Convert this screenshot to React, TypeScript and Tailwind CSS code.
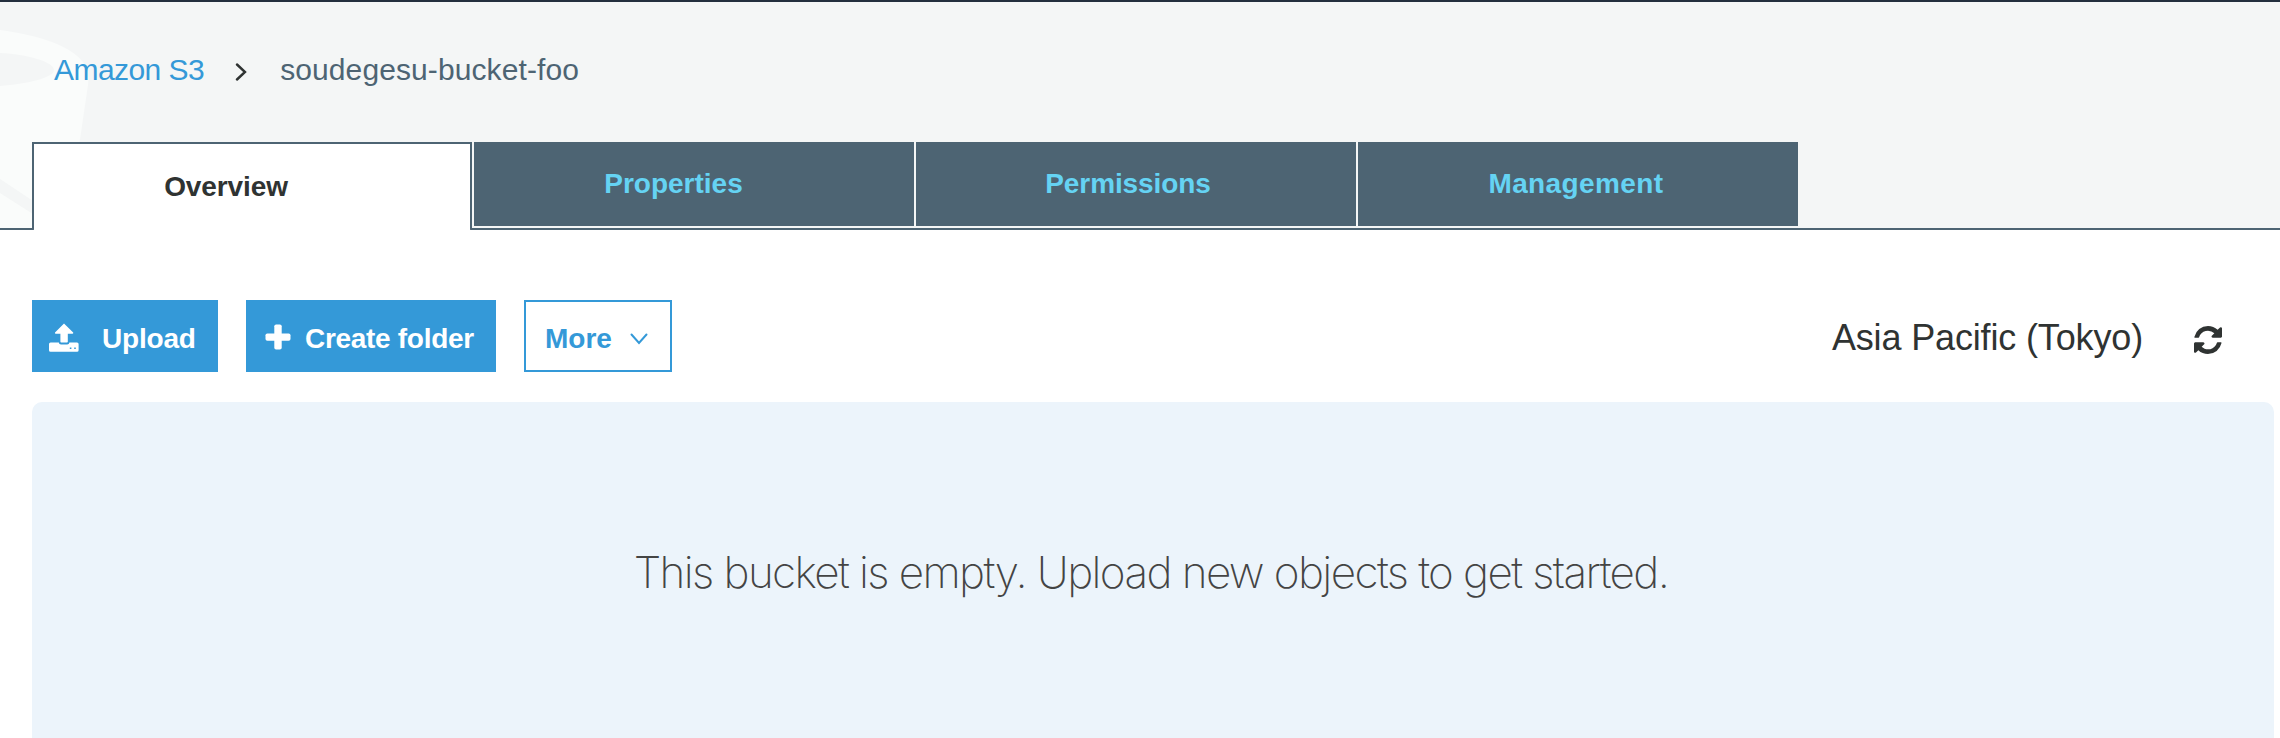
import type { ReactNode } from "react";

function BucketWatermark() {
  return (
    <svg className="pointer-events-none absolute left-0 top-0 h-[226px] w-[100px]" viewBox="0 2 100 226" aria-hidden="true">
      <path
        fill="#fafcfb"
        fillRule="evenodd"
        d="M0 30C38 35 74 46 85 65C88 71 89 78 88 85L67 228H0V193L33 214V201L0 179V86C26 84 54 78 54 70C54 62 27 54 0 53Z"
      />
    </svg>
  );
}

function UploadIcon() {
  return (
    <svg className="-mt-[2px] h-[30px] w-[30px] shrink-0" viewBox="0 0 30 30" fill="currentColor" aria-hidden="true">
      <path d="M15 .4 24.2 9.6Q24.6 10.6 23.6 10.8H18.8V18.8Q18.8 19.6 18 19.6H12.2Q11.4 19.6 11.4 18.8V10.8H6.6Q5.6 10.6 6 9.6Z" />
      <path
        fillRule="evenodd"
        d="M1.6 19.4H9.8Q10 21.4 12 21.4H18.2Q20.2 21.4 20.4 19.4H28Q29.6 19.4 29.6 21V27.2Q29.6 28.8 28 28.8H1.6Q0 28.8 0 27.2V21Q0 19.4 1.6 19.4ZM20.8 24.4V26H22.4V24.4ZM25.2 24.4V26H26.8V24.4Z"
      />
    </svg>
  );
}

function PlusIcon() {
  return (
    <svg className="mt-[2px] h-[26px] w-[26px] shrink-0" viewBox="0 0 26 26" fill="currentColor" aria-hidden="true">
      <rect x=".5" y="9.4" width="25" height="7.4" rx="1.8" />
      <rect x="9.3" y=".5" width="7.4" height="25" rx="1.8" />
    </svg>
  );
}

function RefreshIcon() {
  return (
    <svg className="h-7 w-7" viewBox="0 0 1536 1536" fill="currentColor" aria-hidden="true">
      <path d="M1511 928q0 5-1 7-64 268-268 434.500t-478 166.500q-146 0-282.500-55t-243.500-157l-129 129q-19 19-45 19t-45-19-19-45v-448q0-26 19-45t45-19h448q26 0 45 19t19 45-19 45l-137 137q71 66 161 102t187 36q134 0 250-65t186-179q11-17 53-117 8-23 30-23h192q13 0 22.500 9.500t9.500 22.500zM1536 128v448q0 26-19 45t-45 19h-448q-26 0-45-19t-19-45 19-45l138-138q-148-137-349-137-134 0-250 65t-186 179q-11 17-53 117-8 23-30 23h-199q-13 0-22.500-9.500t-9.500-22.500v-7q65-268 270-434.500t480-166.500q146 0 284 55.500t245 156.500l130-129q19-19 45-19t45 19 19 45z" />
    </svg>
  );
}

function Tab({ children, className }: { children: ReactNode; className: string }) {
  return (
    <button className={`flex h-[84px] w-[440px] items-center justify-center bg-[#4d6473] font-bold text-[#65d3f3] ${className}`}>
      {children}
    </button>
  );
}

export default function App() {
  return (
    <div className="h-[738px] overflow-hidden bg-white font-['Liberation_Sans',Arial,sans-serif] text-[28px] text-[#2f3332]">
      <header className="relative flex h-[230px] flex-col border-b-2 border-t-2 border-b-[#4d6473] border-t-[#232f3e] bg-[#f4f6f6]">
        <BucketWatermark />
        <nav className="relative flex h-[140px] items-center pb-[6px] pl-[54px] text-[30px]">
          <a className="tracking-[-0.55px] text-[#3499d8]">Amazon S3</a>
          <svg className="ml-[31px] mt-[6px] h-[18px] w-[12px]" viewBox="0 0 12 18" fill="none" stroke="currentColor" strokeWidth="2.4" strokeLinecap="round" aria-hidden="true">
            <path d="M2 1.500 10 9 2 16.500" />
          </svg>
          <span className="ml-[33px] tracking-[0.1px] text-[#4d6473]">soudegesu-bucket-foo</span>
        </nav>
        <div className="relative flex items-start gap-[2px] pl-8">
          <button className="-mb-[2px] flex h-[88px] w-[440px] items-center justify-center rounded-b-[2px] border-2 border-b-0 border-[#4d6473] bg-white pr-[52px] font-bold tracking-[-0.1px]">
            Overview
          </button>
          <Tab className="pr-[41px]">Properties</Tab>
          <Tab className="pr-[16px] tracking-[-0.1px]">Permissions</Tab>
          <Tab className="pr-[4px] tracking-[0.4px]">Management</Tab>
        </div>
      </header>

      <main>
        <div className="flex items-center pl-8 pr-[58px] pt-[70px]">
          <button className="flex h-[72px] w-[186px] items-center bg-[#3499d8] pl-[17px] pt-[5px] font-bold text-white">
            <UploadIcon />
            <span className="ml-[23px] tracking-[-0.2px]">Upload</span>
          </button>
          <button className="ml-7 flex h-[72px] w-[250px] items-center whitespace-nowrap bg-[#3499d8] pl-[19px] font-bold text-white">
            <PlusIcon />
            <span className="ml-[14px] pt-[5px] tracking-[-0.3px]">Create folder</span>
          </button>
          <button className="ml-7 flex h-[72px] w-[148px] items-center border-2 border-[#3499d8] bg-white pl-[19px] pt-[5px] font-bold text-[#3499d8]">
            More
            <svg className="ml-[18px] h-[12px] w-[18px]" viewBox="0 0 18 12" fill="none" stroke="currentColor" strokeWidth="2" strokeLinecap="round" aria-hidden="true">
              <path d="M1.500 1.500 9 10 16.500 1.500" />
            </svg>
          </button>
          <span className="ml-auto pt-[3px] text-[36px] tracking-[-0.15px]">Asia Pacific (Tokyo)</span>
          <button className="ml-[51px] mt-[8px]" aria-label="Refresh">
            <RefreshIcon />
          </button>
        </div>

        <section className="ml-8 mr-[6px] mt-[30px] flex h-[336px] justify-center rounded-t-[10px] bg-[#ecf4fb] pr-1 pt-[142px]">
          <p className="whitespace-nowrap font-['Inter',sans-serif] text-[44px] font-extralight leading-[56px] tracking-[-1.6px] text-[#444]">
            This bucket is empty. Upload new objects to get started.
          </p>
        </section>
      </main>
    </div>
  );
}
